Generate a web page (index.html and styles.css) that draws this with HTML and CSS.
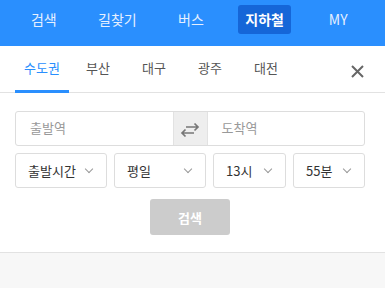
FILE: index.html
```html
<!DOCTYPE html>
<html lang="ko">
<head>
  <meta charset="UTF-8">
  <meta name="viewport" content="width=device-width, initial-scale=1.0">
  <title>지하철</title>
  <link rel="stylesheet" href="styles.css">
</head>
<body>
  <header class="gnb">
    <a class="gnb__item"><span>검색</span></a>
    <a class="gnb__item"><span>길찾기</span></a>
    <a class="gnb__item"><span>버스</span></a>
    <a class="gnb__item gnb__item--on"><span>지하철</span></a>
    <a class="gnb__item"><span>MY</span></a>
  </header>

  <nav class="tabs">
    <a class="tabs__item tabs__item--on">수도권</a>
    <a class="tabs__item">부산</a>
    <a class="tabs__item">대구</a>
    <a class="tabs__item">광주</a>
    <a class="tabs__item">대전</a>
    <button class="tabs__close" aria-label="닫기">
      <svg width="13" height="13" viewBox="0 0 13 13"><path d="M1 1L12 12M12 1L1 12" stroke="#666" stroke-width="2"/></svg>
    </button>
  </nav>

  <section class="search">
    <div class="station">
      <div class="station__field">출발역</div>
      <button class="station__swap" aria-label="바꾸기">
        <svg width="20" height="16" viewBox="0 0 20 16">
          <path d="M6 5H18M14.5 1.5L18 5L14.5 8.5" fill="none" stroke="#777" stroke-width="1.7"/>
          <path d="M14 11H2M5.5 7.5L2 11L5.5 14.5" fill="none" stroke="#777" stroke-width="1.7"/>
        </svg>
      </button>
      <div class="station__field">도착역</div>
    </div>

    <div class="options">
      <div class="select"><span>출발시간</span><i class="select__arrow"></i></div>
      <div class="select"><span>평일</span><i class="select__arrow"></i></div>
      <div class="select"><span>13시</span><i class="select__arrow"></i></div>
      <div class="select"><span>55분</span><i class="select__arrow"></i></div>
    </div>

    <button class="search__btn">검색</button>
  </section>
</body>
</html>
```

FILE: styles.css
```css
* {
  margin: 0;
  padding: 0;
  box-sizing: border-box;
  font-family: "Noto Sans CJK KR", "Noto Sans", sans-serif;
}

body {
  background: #f7f7f7;
}

button {
  border: none;
  background: none;
  cursor: pointer;
}

/* top menu */

.gnb {
  display: flex;
  height: 46px;
  padding: 5px 10px 0 7px;
  background: #2a8ffe;
}

.gnb__item {
  flex: 1;
  text-align: center;
}

.gnb__item span {
  display: inline-block;
  height: 29px;
  padding: 0 7px;
  line-height: 28px;
  font-size: 14px;
  color: #e6efff;
  border-radius: 3px;
}

.gnb__item--on span {
  background: #1566d8;
  color: #fff;
  font-weight: bold;
}

/* region tabs */

.tabs {
  display: flex;
  height: 47px;
  padding-left: 14px;
  padding-right: 21px;
  background: #fff;
  border-bottom: 1px solid #e2e2e2;
}

.tabs__item {
  width: 54px;
  margin: 0 1px -1px;
  border-bottom: 3px solid transparent;
  padding-top: 1px;
  line-height: 42px;
  text-align: center;
  font-size: 13px;
  color: #555;
}

.tabs__item--on {
  color: #2a8ffe;
  border-bottom-color: #2a8ffe;
}

.tabs__close {
  margin-left: auto;
  display: flex;
  align-items: center;
  padding: 4px 0 0;
}

/* search form */

.search {
  padding: 18px 20px 17px 15px;
  background: #fff;
  border-bottom: 1px solid #e2e2e2;
}

.station {
  display: flex;
  height: 35px;
  border: 1px solid #ddd;
  border-radius: 3px;
}

.station__field {
  flex: 1;
  padding-left: 14px;
  line-height: 32px;
  font-size: 13px;
  color: #999;
}

.station__swap {
  width: 35px;
  display: flex;
  align-items: center;
  justify-content: center;
  padding-top: 3px;
  background: #eee;
  border-left: 1px solid #e2e2e2;
  border-right: 1px solid #e2e2e2;
}

.options {
  display: grid;
  grid-template-columns: 92px 92px 73px 1fr;
  gap: 7px;
  margin-top: 7px;
}

.select {
  display: flex;
  align-items: center;
  justify-content: space-between;
  height: 35px;
  padding: 0 12px 0 12px;
  border: 1px solid #ddd;
  border-radius: 3px;
  font-size: 13px;
  color: #333;
}

.select__arrow {
  width: 6px;
  height: 6px;
  margin: 0 2px 4px 0;
  border-right: 1.5px solid #999;
  border-bottom: 1.5px solid #999;
  transform: rotate(45deg);
}

.search__btn {
  display: block;
  width: 80px;
  height: 36px;
  margin: 11px auto 0;
  border-radius: 3px;
  background: #ccc;
  color: #fff;
  font-size: 13px;
  font-weight: bold;
}
```
